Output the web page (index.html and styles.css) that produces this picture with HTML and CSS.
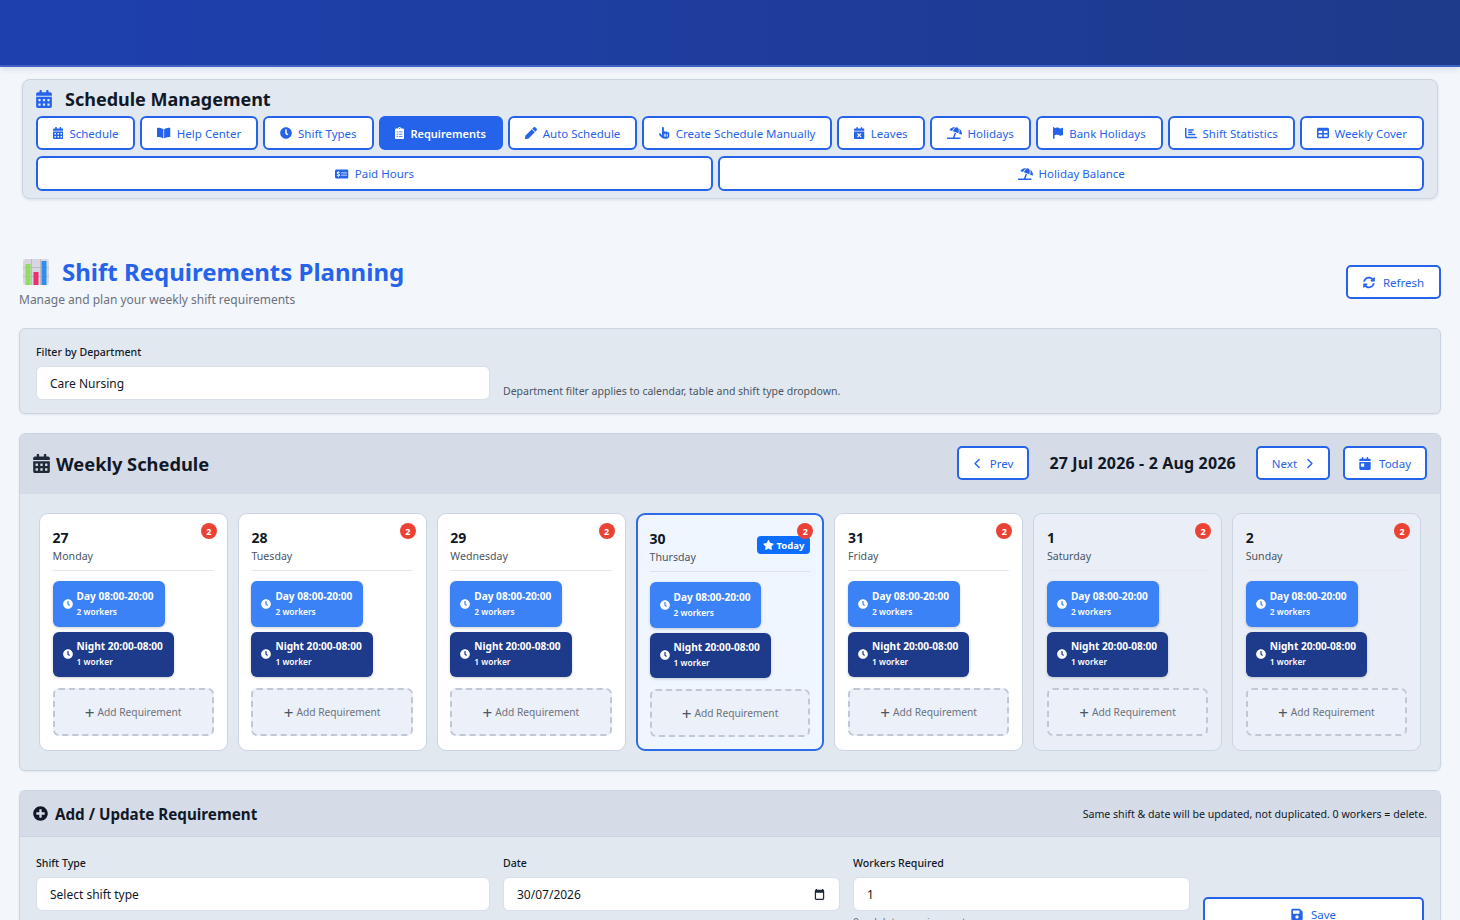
FILE: index.html
```html
<!DOCTYPE html>
<html lang="en">
<head>
    <meta charset="UTF-8">
    <title>Shift Requirements Planning</title>
    <link rel="stylesheet" href="styles.css">
</head>
<body>
    <!-- icon sprite -->
    <svg class="sprite" xmlns="http://www.w3.org/2000/svg">
        <symbol id="i-calendar" viewBox="0 0 448 512"><path d="M0 464c0 26.5 21.5 48 48 48h352c26.5 0 48-21.5 48-48V192H0v272zm320-196c0-6.6 5.4-12 12-12h40c6.6 0 12 5.4 12 12v40c0 6.6-5.4 12-12 12h-40c-6.6 0-12-5.4-12-12v-40zm0 128c0-6.6 5.4-12 12-12h40c6.6 0 12 5.4 12 12v40c0 6.6-5.4 12-12 12h-40c-6.6 0-12-5.4-12-12v-40zM192 268c0-6.6 5.4-12 12-12h40c6.6 0 12 5.4 12 12v40c0 6.6-5.4 12-12 12h-40c-6.6 0-12-5.4-12-12v-40zm0 128c0-6.6 5.4-12 12-12h40c6.6 0 12 5.4 12 12v40c0 6.6-5.4 12-12 12h-40c-6.6 0-12-5.4-12-12v-40zM64 268c0-6.6 5.4-12 12-12h40c6.6 0 12 5.4 12 12v40c0 6.6-5.4 12-12 12H76c-6.6 0-12-5.4-12-12v-40zm0 128c0-6.6 5.4-12 12-12h40c6.6 0 12 5.4 12 12v40c0 6.6-5.4 12-12 12H76c-6.6 0-12-5.4-12-12v-40zM400 64h-48V16c0-8.8-7.2-16-16-16h-32c-8.8 0-16 7.2-16 16v48H160V16c0-8.8-7.2-16-16-16h-32c-8.8 0-16 7.2-16 16v48H48C21.5 64 0 85.5 0 112v48h448v-48c0-26.5-21.5-48-48-48z"/></symbol>
        <symbol id="i-book" viewBox="0 0 576 512"><path d="M542.22 32.05c-54.8 3.11-163.72 14.43-230.96 55.59-4.64 2.84-7.27 7.89-7.27 13.17v363.87c0 11.55 12.63 18.85 23.28 13.49 69.18-34.82 169.23-44.32 218.7-46.92 16.89-.89 30.02-14.43 30.02-30.66V62.75c.01-17.71-15.35-31.74-33.77-30.7zM264.73 87.64C197.5 46.48 88.58 35.17 33.78 32.05 15.36 31.01 0 45.04 0 62.75V400.6c0 16.24 13.13 29.78 30.02 30.66 49.49 2.6 149.59 12.11 218.77 46.95 10.62 5.35 23.21-1.94 23.21-13.46V100.63c0-5.29-2.62-10.14-7.27-12.99z"/></symbol>
        <symbol id="i-clock" viewBox="0 0 512 512"><path d="M256,8C119,8,8,119,8,256S119,504,256,504,504,393,504,256,393,8,256,8Zm92.49,313h0l-20,25a16,16,0,0,1-22.49,2.5h0l-67-49.72a40,40,0,0,1-15-31.23V112a16,16,0,0,1,16-16h32a16,16,0,0,1,16,16V256l58,42.5A16,16,0,0,1,348.49,321Z"/></symbol>
        <symbol id="i-clipboard" viewBox="0 0 384 512"><path d="M336 64h-80c0-35.3-28.7-64-64-64s-64 28.7-64 64H48C21.5 64 0 85.5 0 112v352c0 26.5 21.5 48 48 48h288c26.5 0 48-21.5 48-48V112c0-26.5-21.5-48-48-48zM96 424c-13.3 0-24-10.7-24-24s10.7-24 24-24 24 10.7 24 24-10.7 24-24 24zm0-96c-13.3 0-24-10.7-24-24s10.7-24 24-24 24 10.7 24 24-10.7 24-24 24zm0-96c-13.3 0-24-10.7-24-24s10.7-24 24-24 24 10.7 24 24-10.7 24-24 24zm96-192c13.3 0 24 10.7 24 24s-10.7 24-24 24-24-10.7-24-24 10.7-24 24-24zm128 368c0 4.4-3.6 8-8 8H168c-4.4 0-8-3.6-8-8v-16c0-4.4 3.6-8 8-8h144c4.4 0 8 3.6 8 8v16zm0-96c0 4.4-3.6 8-8 8H168c-4.4 0-8-3.6-8-8v-16c0-4.4 3.6-8 8-8h144c4.4 0 8 3.6 8 8v16zm0-96c0 4.4-3.6 8-8 8H168c-4.4 0-8-3.6-8-8v-16c0-4.4 3.6-8 8-8h144c4.4 0 8 3.6 8 8v16z"/></symbol>
        <symbol id="i-pen" viewBox="0 0 512 512"><path d="M290.74 93.24l128.02 128.02-277.99 277.99-114.14 12.6C11.35 513.54-1.56 500.62.14 485.34l12.7-114.22 277.9-277.88zm207.2-19.06l-60.11-60.11c-18.75-18.75-49.16-18.75-67.91 0l-56.55 56.55 128.02 128.02 56.55-56.55c18.75-18.76 18.75-49.16 0-67.91z"/></symbol>
        <symbol id="i-hand" viewBox="0 0 448 512"><path d="M128 40c0-22.1 17.9-40 40-40s40 17.9 40 40V188.2c8.5-7.6 19.7-12.2 32-12.2c20.6 0 38.2 13 45 31.2c8.8-9.3 21.2-15.2 35-15.2c25.3 0 46 19.5 47.9 44.3c8.5-7.7 19.8-12.3 32.1-12.3c26.5 0 48 21.5 48 48v32 64c0 70.7-57.3 128-128 128l-16 0H240l-.1 0h-5.2c-5 0-9.9-.3-14.7-1c-55.3-5.6-106.2-34-140-79L8 336c-13.3-17.7-9.7-42.7 8-56s42.7-9.7 56 8l56 74.7V40zM240 304c0-8.8-7.2-16-16-16s-16 7.2-16 16v96c0 8.8 7.2 16 16 16s16-7.2 16-16V304zm48-16c-8.8 0-16 7.2-16 16v96c0 8.8 7.2 16 16 16s16-7.2 16-16V304c0-8.8-7.2-16-16-16zm80 16c0-8.8-7.2-16-16-16s-16 7.2-16 16v96c0 8.8 7.2 16 16 16s16-7.2 16-16V304z"/></symbol>
        <symbol id="i-calendar-x" viewBox="0 0 448 512"><path d="M128 0c17.7 0 32 14.3 32 32V64H288V32c0-17.7 14.3-32 32-32s32 14.3 32 32V64h48c26.5 0 48 21.5 48 48v48H0V112C0 85.5 21.5 64 48 64H96V32c0-17.7 14.3-32 32-32zM0 192H448V464c0 26.5-21.5 48-48 48H48c-26.5 0-48-21.5-48-48V192zM305 305c9.4-9.4 9.4-24.6 0-33.9s-24.6-9.4-33.9 0l-47 47-47-47c-9.4-9.4-24.6-9.4-33.9 0s-9.4 24.6 0 33.9l47 47-47 47c-9.4 9.4-9.4 24.6 0 33.9s24.6 9.4 33.9 0l47-47 47 47c9.4 9.4 24.6 9.4 33.9 0s9.4-24.6 0-33.9l-47-47 47-47z"/></symbol>
        <symbol id="i-beach" viewBox="0 0 640 512"><path d="M115.38 136.9l102.11 37.18c35.19-81.54 86.21-144.29 139-173.7-95.88-4.89-188.78 36.96-248.53 111.8-6.69 8.4-2.66 21.05 7.42 24.72zm132.25 48.16l238.48 86.83c35.76-121.38 18.7-231.66-42.63-253.98-7.4-2.7-15.13-4-23.09-4-58.02.01-128.27 69.17-172.76 171.15zM521.48 60.5c6.22 16.3 10.83 34.6 13.2 55.19 5.74 49.89-1.42 108.23-18.95 166.98l102.62 37.36c10.09 3.67 21.31-3.43 21.57-14.17 2.32-95.69-41.91-187.44-118.44-245.36zM560 447.98H321.06L386 269.5l-60.14-21.9-72.9 200.37H16c-8.84 0-16 7.16-16 16.01v32.01C0 504.83 7.16 512 16 512h544c8.84 0 16-7.17 16-16.01v-32.01c0-8.84-7.16-16-16-16z"/></symbol>
        <symbol id="i-flag" viewBox="0 0 448 512"><path d="M64 32C64 14.3 49.7 0 32 0S0 14.3 0 32V64 368 480c0 17.7 14.3 32 32 32s32-14.3 32-32V352l64.3-16.1c41.1-10.3 84.6-5.5 122.5 13.4c44.2 22.1 95.5 24.8 141.7 7.4l34.7-13c12.5-4.7 20.8-16.6 20.8-30V66.1c0-23-24.2-38-44.8-27.7l-9.6 4.8c-46.3 23.2-100.8 23.2-147.1 0c-35.1-17.6-75.4-22-113.5-12.5L64 48V32z"/></symbol>
        <symbol id="i-chart" viewBox="0 0 512 512"><path d="M32 32c17.7 0 32 14.3 32 32V400c0 8.8 7.2 16 16 16H480c17.7 0 32 14.3 32 32s-14.3 32-32 32H80c-44.2 0-80-35.8-80-80V64C0 46.3 14.3 32 32 32zm96 96c0-17.7 14.3-32 32-32l192 0c17.7 0 32 14.3 32 32s-14.3 32-32 32l-192 0c-17.7 0-32-14.3-32-32zm32 64H288c17.7 0 32 14.3 32 32s-14.3 32-32 32H160c-17.7 0-32-14.3-32-32s14.3-32 32-32zm0 96H416c17.7 0 32 14.3 32 32s-14.3 32-32 32H160c-17.7 0-32-14.3-32-32s14.3-32 32-32z"/></symbol>
        <symbol id="i-table" viewBox="0 0 512 512"><path d="M64 256V160H224v96H64zm0 64H224v96H64V320zm224 96V320H448v96H288zM448 256H288V160H448v96zM64 32C28.7 32 0 60.7 0 96V416c0 35.3 28.7 64 64 64H448c35.3 0 64-28.7 64-64V96c0-35.3-28.7-64-64-64H64z"/></symbol>
        <symbol id="i-money" viewBox="0 0 576 512"><path d="M64 64C28.7 64 0 92.7 0 128V384c0 35.3 28.7 64 64 64H512c35.3 0 64-28.7 64-64V128c0-35.3-28.7-64-64-64H64zM272 192H496c8.8 0 16 7.2 16 16s-7.2 16-16 16H272c-8.8 0-16-7.2-16-16s7.2-16 16-16zM256 304c0-8.8 7.2-16 16-16H496c8.8 0 16 7.2 16 16s-7.2 16-16 16H272c-8.8 0-16-7.2-16-16zM164 152v13.9c7.5 1.2 14.6 2.9 21.1 4.7c10.7 2.8 17 13.8 14.2 24.5s-13.8 17-24.5 14.2c-11-2.9-21.6-5-31.2-5.2c-7.9-.1-16 1.8-21.5 5c-4.8 2.8-6.2 5.6-6.2 9.3c0 1.8 .1 3.5 5.3 6.7c6.3 3.8 15.5 6.7 28.3 10.5l.7 .2c11.2 3.4 25.6 7.7 37.1 15c12.9 8.1 24.3 21.3 24.6 41.6c.3 20.9-10.5 36.1-24.8 45c-7.2 4.5-15.2 7.3-23.2 9V360c0 11-9 20-20 20s-20-9-20-20V345.4c-10.3-2.2-20-5.5-28.2-8.4l0 0 0 0c-2.1-.7-4.1-1.4-6.1-2.1c-10.5-3.5-16.1-14.8-12.6-25.3s14.8-16.1 25.3-12.6c2.5 .8 4.9 1.7 7.2 2.4c13.6 4.6 24 8.1 35.1 8.5c8.6 .3 16.5-1.6 21.4-4.7c4.1-2.5 6-5.5 5.9-10.5c0-2.9-.8-5-5.9-8.2c-6.3-4-15.4-6.9-28-10.7l-1.7-.5c-10.9-3.3-24.6-7.4-35.6-14c-12.7-7.7-24.6-20.5-24.7-40.7c-.1-21.1 11.8-35.7 25.8-43.9c6.9-4.1 14.5-6.8 22.2-8.5V152c0-11 9-20 20-20s20 9 20 20z"/></symbol>
        <symbol id="i-sync" viewBox="0 0 512 512"><path d="M370.72 133.28C339.458 104.008 298.888 87.962 255.848 88c-77.458.068-144.328 53.178-162.791 126.85-1.344 5.363-6.122 9.15-11.651 9.15H24.103c-7.498 0-13.194-6.807-11.807-14.176C33.933 94.924 134.813 8 256 8c66.448 0 126.791 26.136 171.315 68.685L463.03 40.97C478.149 25.851 504 36.559 504 57.941V192c0 13.255-10.745 24-24 24H345.941c-21.382 0-32.09-25.851-16.971-40.971l41.75-41.749zM32 296h134.059c21.382 0 32.09 25.851 16.971 40.971l-41.75 41.75c31.262 29.273 71.835 45.319 114.876 45.28 77.418-.07 144.315-53.144 162.787-126.849 1.344-5.363 6.122-9.15 11.651-9.15h57.304c7.498 0 13.194 6.807 11.807 14.176C478.067 417.076 377.187 504 256 504c-66.448 0-126.791-26.136-171.315-68.685L48.97 471.03C33.851 486.149 8 475.441 8 454.059V320c0-13.255 10.745-24 24-24z"/></symbol>
        <symbol id="i-day" viewBox="0 0 448 512"><path d="M128 0c17.7 0 32 14.3 32 32V64H288V32c0-17.7 14.3-32 32-32s32 14.3 32 32V64h48c26.5 0 48 21.5 48 48v48H0V112C0 85.5 21.5 64 48 64H96V32c0-17.7 14.3-32 32-32zM0 192H448V464c0 26.5-21.5 48-48 48H48c-26.5 0-48-21.5-48-48V192zm80 64c-8.8 0-16 7.2-16 16v96c0 8.8 7.2 16 16 16h96c8.8 0 16-7.2 16-16V272c0-8.8-7.2-16-16-16H80z"/></symbol>
        <symbol id="i-plus-circle" viewBox="0 0 512 512"><path d="M256 8C119 8 8 119 8 256s111 248 248 248 248-111 248-248S393 8 256 8zm144 276c0 6.6-5.4 12-12 12h-92v92c0 6.6-5.4 12-12 12h-56c-6.6 0-12-5.4-12-12v-92h-92c-6.6 0-12-5.4-12-12v-56c0-6.6 5.4-12 12-12h92v-92c0-6.6 5.4-12 12-12h56c6.6 0 12 5.4 12 12v92h92c6.6 0 12 5.4 12 12v56z"/></symbol>
        <symbol id="i-star" viewBox="0 0 576 512"><path d="M259.3 17.8L194 150.2 47.9 171.5c-26.2 3.8-36.7 36.1-17.7 54.6l105.7 103-25 145.5c-4.5 26.3 23.2 46 46.4 33.7L288 439.6l130.7 68.7c23.2 12.2 50.9-7.4 46.4-33.7l-25-145.5 105.7-103c19-18.5 8.5-50.8-17.7-54.6L382 150.2 316.7 17.8c-11.7-23.6-45.6-23.9-57.4 0z"/></symbol>
        <symbol id="i-save" viewBox="0 0 448 512"><path d="M433.941 129.941l-83.882-83.882A48 48 0 0 0 316.118 32H48C21.49 32 0 53.49 0 80v352c0 26.51 21.49 48 48 48h352c26.51 0 48-21.49 48-48V163.882a48 48 0 0 0-14.059-33.941zM224 416c-35.346 0-64-28.654-64-64 0-35.346 28.654-64 64-64s64 28.654 64 64c0 35.346-28.654 64-64 64zm96-304.52V212c0 6.627-5.373 12-12 12H76c-6.627 0-12-5.373-12-12V108c0-6.627 5.373-12 12-12h228.52c3.183 0 6.235 1.264 8.485 3.515l3.48 3.48A11.996 11.996 0 0 1 320 111.48z"/></symbol>
        <symbol id="i-left" viewBox="0 0 320 512"><path d="M224 96L64 256l160 160" fill="none" stroke="currentColor" stroke-width="56" stroke-linecap="round" stroke-linejoin="round"/></symbol>
        <symbol id="i-right" viewBox="0 0 320 512"><path d="M96 96l160 160L96 416" fill="none" stroke="currentColor" stroke-width="56" stroke-linecap="round" stroke-linejoin="round"/></symbol>
        <symbol id="i-date" viewBox="0 0 14 16"><path d="M3 1v2M11 1v2" fill="none" stroke="currentColor" stroke-width="1.6"/><rect x="1.8" y="2.8" width="10.4" height="11.4" rx="1" fill="none" stroke="currentColor" stroke-width="1.6"/><rect x="1.8" y="2.8" width="10.4" height="3" fill="currentColor"/></symbol>
    </svg>

    <header class="topbar"></header>

    <section class="mgmt">
        <h2 class="mgmt-title">
            <svg class="mgmt-icon"><use href="#i-calendar"/></svg>
            Schedule Management
        </h2>
        <nav class="tabs">
            <a class="tab"><svg class="ico" viewBox="0 0 448 512"><use href="#i-calendar"/></svg>Schedule</a>
            <a class="tab"><svg class="ico" viewBox="0 0 576 512"><use href="#i-book"/></svg>Help Center</a>
            <a class="tab"><svg class="ico" viewBox="0 0 512 512"><use href="#i-clock"/></svg>Shift Types</a>
            <a class="tab active"><svg class="ico" viewBox="0 0 384 512"><use href="#i-clipboard"/></svg>Requirements</a>
            <a class="tab"><svg class="ico" viewBox="0 0 512 512"><use href="#i-pen"/></svg>Auto Schedule</a>
            <a class="tab"><svg class="ico" viewBox="0 0 448 512"><use href="#i-hand"/></svg>Create Schedule Manually</a>
            <a class="tab"><svg class="ico" viewBox="0 0 448 512"><use href="#i-calendar-x"/></svg>Leaves</a>
            <a class="tab"><svg class="ico" viewBox="0 0 640 512"><use href="#i-beach"/></svg>Holidays</a>
            <a class="tab"><svg class="ico" viewBox="0 0 448 512"><use href="#i-flag"/></svg>Bank Holidays</a>
            <a class="tab"><svg class="ico" viewBox="0 0 512 512"><use href="#i-chart"/></svg>Shift Statistics</a>
            <a class="tab"><svg class="ico" viewBox="0 0 512 512"><use href="#i-table"/></svg>Weekly Cover</a>
            <a class="tab tab-wide"><svg class="ico" viewBox="0 0 576 512"><use href="#i-money"/></svg>Paid Hours</a>
            <a class="tab tab-wide"><svg class="ico" viewBox="0 0 640 512"><use href="#i-beach"/></svg>Holiday Balance</a>
        </nav>
    </section>

    <main class="page">
        <div class="page-head">
            <div>
                <h1 class="page-title">
                    <svg class="emoji" viewBox="0 0 26 26">
                        <rect width="26" height="26" rx="3" fill="#d9d6e2"/>
                        <path d="M0 8.5h26M0 17.500h26M8.500 0v26M17.500 0v26" stroke="#bdb9c9" stroke-width="1"/>
                        <rect x="2.500" y="5" width="5" height="21" fill="#8fdc5e"/>
                        <rect x="10.500" y="13" width="5" height="13" fill="#e8316f"/>
                        <rect x="18.500" y="2" width="5" height="24" fill="#2f8fe8"/>
                    </svg>
                    Shift Requirements Planning
                </h1>
                <p class="page-sub">Manage and plan your weekly shift requirements</p>
            </div>
            <button class="btn btn-refresh"><svg class="ico"><use href="#i-sync"/></svg>Refresh</button>
        </div>

        <section class="card filter">
            <div class="filter-col">
                <label class="field-label">Filter by Department</label>
                <div class="field">Care Nursing</div>
            </div>
            <span class="filter-hint">Department filter applies to calendar, table and shift type dropdown.</span>
        </section>

        <section class="card week">
            <div class="card-head week-head">
                <h3 class="week-title"><svg class="week-icon"><use href="#i-calendar"/></svg>Weekly Schedule</h3>
                <div class="week-nav">
                    <button class="btn"><svg class="ico chev"><use href="#i-left"/></svg>Prev</button>
                    <span class="week-range">27 Jul 2026 - 2 Aug 2026</span>
                    <button class="btn">Next<svg class="ico chev"><use href="#i-right"/></svg></button>
                    <button class="btn"><svg class="ico"><use href="#i-day"/></svg>Today</button>
                </div>
            </div>
            <div class="days">
                <article class="day">
                    <span class="count">2</span>
                    <div class="day-head"><div class="day-num">27</div><div class="day-name">Monday</div></div>
                    <div class="shift shift-day"><svg class="shift-ico"><use href="#i-clock"/></svg><div><b>Day 08:00-20:00</b><small>2 workers</small></div></div>
                    <div class="shift shift-night"><svg class="shift-ico"><use href="#i-clock"/></svg><div><b>Night 20:00-08:00</b><small>1 worker</small></div></div>
                    <div class="add-req"><span class="plus">+</span> Add Requirement</div>
                </article>
                <article class="day">
                    <span class="count">2</span>
                    <div class="day-head"><div class="day-num">28</div><div class="day-name">Tuesday</div></div>
                    <div class="shift shift-day"><svg class="shift-ico"><use href="#i-clock"/></svg><div><b>Day 08:00-20:00</b><small>2 workers</small></div></div>
                    <div class="shift shift-night"><svg class="shift-ico"><use href="#i-clock"/></svg><div><b>Night 20:00-08:00</b><small>1 worker</small></div></div>
                    <div class="add-req"><span class="plus">+</span> Add Requirement</div>
                </article>
                <article class="day">
                    <span class="count">2</span>
                    <div class="day-head"><div class="day-num">29</div><div class="day-name">Wednesday</div></div>
                    <div class="shift shift-day"><svg class="shift-ico"><use href="#i-clock"/></svg><div><b>Day 08:00-20:00</b><small>2 workers</small></div></div>
                    <div class="shift shift-night"><svg class="shift-ico"><use href="#i-clock"/></svg><div><b>Night 20:00-08:00</b><small>1 worker</small></div></div>
                    <div class="add-req"><span class="plus">+</span> Add Requirement</div>
                </article>
                <article class="day today">
                    <span class="count">2</span>
                    <span class="today-pill"><svg class="star"><use href="#i-star"/></svg>Today</span>
                    <div class="day-head"><div class="day-num">30</div><div class="day-name">Thursday</div></div>
                    <div class="shift shift-day"><svg class="shift-ico"><use href="#i-clock"/></svg><div><b>Day 08:00-20:00</b><small>2 workers</small></div></div>
                    <div class="shift shift-night"><svg class="shift-ico"><use href="#i-clock"/></svg><div><b>Night 20:00-08:00</b><small>1 worker</small></div></div>
                    <div class="add-req"><span class="plus">+</span> Add Requirement</div>
                </article>
                <article class="day">
                    <span class="count">2</span>
                    <div class="day-head"><div class="day-num">31</div><div class="day-name">Friday</div></div>
                    <div class="shift shift-day"><svg class="shift-ico"><use href="#i-clock"/></svg><div><b>Day 08:00-20:00</b><small>2 workers</small></div></div>
                    <div class="shift shift-night"><svg class="shift-ico"><use href="#i-clock"/></svg><div><b>Night 20:00-08:00</b><small>1 worker</small></div></div>
                    <div class="add-req"><span class="plus">+</span> Add Requirement</div>
                </article>
                <article class="day weekend">
                    <span class="count">2</span>
                    <div class="day-head"><div class="day-num">1</div><div class="day-name">Saturday</div></div>
                    <div class="shift shift-day"><svg class="shift-ico"><use href="#i-clock"/></svg><div><b>Day 08:00-20:00</b><small>2 workers</small></div></div>
                    <div class="shift shift-night"><svg class="shift-ico"><use href="#i-clock"/></svg><div><b>Night 20:00-08:00</b><small>1 worker</small></div></div>
                    <div class="add-req"><span class="plus">+</span> Add Requirement</div>
                </article>
                <article class="day weekend">
                    <span class="count">2</span>
                    <div class="day-head"><div class="day-num">2</div><div class="day-name">Sunday</div></div>
                    <div class="shift shift-day"><svg class="shift-ico"><use href="#i-clock"/></svg><div><b>Day 08:00-20:00</b><small>2 workers</small></div></div>
                    <div class="shift shift-night"><svg class="shift-ico"><use href="#i-clock"/></svg><div><b>Night 20:00-08:00</b><small>1 worker</small></div></div>
                    <div class="add-req"><span class="plus">+</span> Add Requirement</div>
                </article>
            </div>
        </section>

        <section class="card add">
            <div class="card-head add-head">
                <h3 class="add-title"><svg class="add-icon"><use href="#i-plus-circle"/></svg>Add / Update Requirement</h3>
                <span class="add-note">Same shift &amp; date will be updated, not duplicated. 0 workers = delete.</span>
            </div>
            <div class="add-form">
                <div>
                    <label class="field-label">Shift Type</label>
                    <div class="field">Select shift type</div>
                </div>
                <div>
                    <label class="field-label">Date</label>
                    <div class="field field-date">30/07/2026<svg class="date-ico"><use href="#i-date"/></svg></div>
                </div>
                <div>
                    <label class="field-label">Workers Required</label>
                    <div class="field">1</div>
                    <div class="field-help">0 = delete requirement</div>
                </div>
                <button class="btn btn-save"><svg class="ico"><use href="#i-save"/></svg>Save</button>
            </div>
        </section>
    </main>
</body>
</html>
```

FILE: styles.css
```css
* {
    box-sizing: border-box;
}

html, body {
    height: 920px;
    overflow: hidden;
}

body {
    margin: 0;
    background: #f3f6fb;
    color: #111827;
    font-family: "Noto Sans", "Open Sans", Arial, sans-serif;
    font-size: 12px;
}

h1, h2, h3, p {
    margin: 0;
}

.sprite {
    display: none;
}

.ico {
    width: 12px;
    height: 13px;
    fill: currentColor;
    flex: none;
}

.chev {
    width: 9px;
}

/* Top bar */
.topbar {
    height: 67px;
    background: linear-gradient(90deg, #1e40af, #1e3a8a);
    border-bottom: 2px solid #3f62c4;
    box-shadow: 0 2px 6px rgba(30, 58, 138, 0.15);
}

/* Schedule management panel */
.mgmt {
    margin: 12px 22px 0;
    padding: 7px 13px 6px;
    height: 120px;
    background: #e2e8f0;
    border: 1px solid #cbd5e1;
    border-radius: 8px;
    box-shadow: 0 1px 3px rgba(15, 23, 42, 0.1);
}

.mgmt-title {
    display: flex;
    align-items: center;
    gap: 13px;
    height: 25px;
    margin-bottom: 4px;
    font-size: 18px;
    font-weight: 700;
    line-height: 25px;
}

.mgmt-icon {
    width: 16px;
    height: 18px;
    fill: #2563eb;
    margin-top: -2px;
}

.tabs {
    display: flex;
    flex-wrap: wrap;
    gap: 6px 5px;
}

.tab {
    flex: 1 1 auto;
    height: 34px;
    display: flex;
    align-items: center;
    justify-content: center;
    gap: 6px;
    padding: 0 14px;
    background: #fff;
    border: 2px solid #2563eb;
    border-radius: 6px;
    color: #2563eb;
    font-size: 11.500px;
    white-space: nowrap;
}

.tab .ico {
    width: auto;
    height: 12px;
}

.tab.active {
    background: #2563eb;
    color: #fff;
    font-size: 11px;
    font-weight: 600;
}

.tab-wide {
    height: 35px;
}

/* Page */
.page {
    padding: 0 19px;
}

.page-head {
    display: flex;
    justify-content: space-between;
    align-items: flex-end;
    height: 109px;
    margin-bottom: 20px;
}

.page-title {
    display: flex;
    align-items: center;
    gap: 13px;
    margin-left: 4px;
    color: #2563eb;
    font-size: 24px;
    font-weight: 700;
    line-height: 34px;
}

.emoji {
    width: 26px;
    height: 26px;
}

.page-sub {
    margin-top: 2px;
    color: #6b7280;
    font-size: 12px;
    line-height: 17px;
}

.btn {
    display: inline-flex;
    align-items: center;
    justify-content: center;
    gap: 8px;
    height: 34px;
    padding: 0 15px;
    background: #fff;
    border: 2px solid #2563eb;
    border-radius: 5px;
    color: #2563eb;
    font-family: inherit;
    font-size: 11.500px;
}

.btn-refresh {
    width: 95px;
    margin-bottom: 9px;
}

/* Cards */
.card {
    background: #e2e8f0;
    border: 1px solid #cbd5e1;
    border-radius: 6px;
    box-shadow: 0 1px 2px rgba(15, 23, 42, 0.08);
}

.card-head {
    display: flex;
    align-items: center;
    justify-content: space-between;
    background: #d5dce8;
}

.filter {
    display: flex;
    align-items: flex-end;
    gap: 13px;
    height: 86px;
    padding: 16px 16px 13px;
    margin-bottom: 19px;
}

.filter-col {
    width: 454px;
}

.filter-hint {
    margin-bottom: 1px;
    color: #4b5563;
    font-size: 10.500px;
    line-height: 16px;
}

.field-label {
    display: block;
    margin-bottom: 6px;
    font-size: 10.600px;
    font-weight: 500;
    line-height: 15px;
}

.field {
    display: flex;
    align-items: center;
    justify-content: space-between;
    height: 34px;
    padding: 0 13px;
    background: #fff;
    border: 1px solid #d8dfe9;
    border-radius: 6px;
    font-size: 12px;
}

.date-ico {
    width: 11px;
    height: 13px;
    margin-right: 1px;
    fill: #1f2937;
    color: #1f2937;
}

/* Weekly schedule */
.week {
    height: 338px;
    margin-bottom: 19px;
    overflow: hidden;
}

.week-head {
    height: 60px;
    padding: 0 13px 2px;
}

.week-title {
    display: flex;
    align-items: center;
    gap: 6px;
    font-size: 18.300px;
    font-weight: 700;
}

.week-icon {
    width: 17px;
    height: 19px;
    fill: #1f2937;
}

.week-nav {
    display: flex;
    align-items: center;
    gap: 13px;
}

.week-nav .btn {
    padding: 0 14px;
}

.week-range {
    margin: 0 7px;
    font-size: 16px;
    font-weight: 700;
    letter-spacing: 0.15px;
}

.days {
    display: grid;
    grid-template-columns: repeat(7, 1fr);
    gap: 10px;
    padding: 19px 19px 0;
}

.day {
    position: relative;
    height: 238px;
    padding: 14px 13px 0 12.600px;
    background: #fff;
    border: 1px solid #cbd5e1;
    border-radius: 9px;
}

.day.weekend {
    background: #eaeff7;
}

.day.today {
    padding: 14px 12px 0;
    background: #eff6ff;
    border: 2px solid #2f6be6;
}

.day-head {
    height: 43px;
    margin-bottom: 10px;
    border-bottom: 1px solid #e5e7eb;
}

.day.today .day-head {
    border-bottom-color: #dbe4f3;
}

.day-num {
    font-size: 14px;
    font-weight: 700;
    line-height: 19px;
}

.day-name {
    color: #4b5563;
    font-size: 10.600px;
    line-height: 18px;
}

.count {
    position: absolute;
    top: 9px;
    right: 10px;
    width: 16px;
    height: 16px;
    display: flex;
    align-items: center;
    justify-content: center;
    background: #ea4335;
    border-radius: 50%;
    color: #fff;
    font-size: 9px;
    font-weight: 700;
    z-index: 2;
}

.day.today .count {
    top: 8px;
    right: 9px;
}

.today-pill {
    position: absolute;
    top: 21px;
    right: 12px;
    height: 18px;
    display: flex;
    align-items: center;
    gap: 3px;
    padding: 0 6px;
    background: #0d6efd;
    border-radius: 4px;
    color: #fff;
    font-size: 9.500px;
    font-weight: 700;
}

.star {
    width: 11px;
    height: 10px;
    fill: #fff;
}

.shift {
    display: flex;
    align-items: center;
    gap: 4px;
    width: max-content;
    height: 45.500px;
    margin-bottom: 5px;
    padding: 0 11px 0 10px;
    border-radius: 6px;
    color: #fff;
    box-shadow: 0 1px 3px rgba(15, 23, 42, 0.2);
}

.shift-day {
    background: #3b82f6;
}

.shift-night {
    background: #1e3a8a;
}

.shift-ico {
    width: 10px;
    height: 10px;
    fill: #fff;
    flex: none;
}

.shift b {
    display: block;
    font-size: 10.100px;
    font-weight: 700;
    line-height: 15px;
}

.shift small {
    display: block;
    font-size: 8.400px;
    font-weight: 600;
    line-height: 15px;
}

.add-req {
    height: 48px;
    margin-top: 11px;
    display: flex;
    align-items: center;
    justify-content: center;
    gap: 3px;
    background: #ecf0f8;
    border: 2px dashed #c2c8d3;
    border-radius: 6px;
    color: #6b7280;
    font-size: 10.200px;
}

.plus {
    color: #4b5563;
    font-size: 17px;
    line-height: 15px;
}

/* Add / update form */
.add-head {
    height: 46px;
    padding: 0 13px;
    border-bottom: 1px solid #cbd5e1;
}

.add-title {
    display: flex;
    align-items: center;
    gap: 7px;
    font-size: 15.200px;
    font-weight: 700;
}

.add-icon {
    width: 15px;
    height: 15px;
    fill: #111827;
}

.add-note {
    font-size: 10.600px;
}

.add-form {
    display: grid;
    grid-template-columns: 454px 337px 337px 221px;
    gap: 13px;
    padding: 19px 16px 18px;
}

.btn-save {
    align-self: start;
    margin-top: 41px;
    height: 36px;
    padding-bottom: 2px;
}

.field-help {
    margin-top: 4px;
    color: #6b7280;
    font-size: 10.500px;
}
```
